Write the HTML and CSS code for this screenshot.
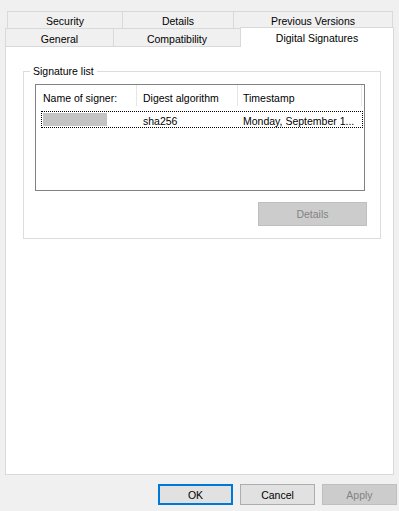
FILE: index.html
```html
<!DOCTYPE html>
<html>
<head>
<meta charset="utf-8">
<link rel="stylesheet" href="styles.css">
</head>
<body>
<div class="dialog">
  <div class="tabs">
    <div class="row row1">
      <div class="tab t-security">Security</div>
      <div class="tab t-details">Details</div>
      <div class="tab t-prev">Previous Versions</div>
    </div>
    <div class="row row2">
      <div class="tab t-general">General</div>
      <div class="tab t-compat">Compatibility</div>
      <div class="tab t-digital selected">Digital Signatures</div>
    </div>
  </div>
  <div class="panel">
    <fieldset class="group">
      <legend class="legend">Signature list</legend>
      <div class="listview">
        <div class="lv-header">
          <div class="col c1">Name of signer:</div>
          <div class="col c2">Digest algorithm</div>
          <div class="col c3">Timestamp</div>
          <div class="col c4"></div>
        </div>
        <div class="lv-row">
          <div class="cell c1"><span class="redacted"></span></div>
          <div class="cell c2">sha256</div>
          <div class="cell c3">Monday, September 1...</div>
        </div>
      </div>
      <div class="group-actions">
        <button class="btn disabled wide">Details</button>
      </div>
    </fieldset>
  </div>
  <div class="footer">
    <button class="btn default">OK</button>
    <button class="btn">Cancel</button>
    <button class="btn disabled">Apply</button>
  </div>
</div>
</body>
</html>
```
FILE: styles.css
```css
* { box-sizing: border-box; }
html, body { margin: 0; padding: 0; }
body {
  background: #f0f0f0;
  width: 399px;
  height: 511px;
  overflow: hidden;
  font-family: "Liberation Sans", Arial, sans-serif;
  font-size: 10.5px;
  color: #000;
}
.tabs { padding-top: 11px; }
.row { display: flex; }
.row1 { margin-left: 7px; height: 17px; }
.row2 { margin-left: 5px; height: 19px; align-items: flex-end; }
.tab {
  border: 1px solid #d9d9d9;
  margin-right: -1px;
  background: #f0f0f0;
  display: flex;
  align-items: center;
  justify-content: center;
  line-height: 1;
  flex-shrink: 0;
}
.row1 .tab { border-bottom: none; height: 17px; padding-top: 3px; }
.row2 .tab { height: 19px; padding-top: 3px; }
.t-security { width: 116px; }
.t-details { width: 112px; }
.t-prev { width: 160px; }
.t-general { width: 109px; }
.t-compat { width: 128px; }
.t-digital { width: 154px; }
.tab.selected {
  background: #fff;
  border-bottom: none;
  height: 20px;
  margin-top: -1px;
  align-items: flex-start;
  padding-top: 5px;
}
.panel {
  margin-left: 5px;
  width: 389px;
  height: 428px;
  background: #fff;
  border: 1px solid #d9d9d9;
  border-top: none;
  padding: 17px 0 0 17px;
}
.group {
  margin: 0;
  padding: 0;
  width: 358px;
  height: 175px;
  border: 1px solid #dcdcdc;
  min-width: 0;
}
.legend {
  padding: 0 3px;
  margin-left: 6px;
  line-height: 14px;
}
.listview {
  margin: 6px 0 0 11px;
  width: 330px;
  height: 107px;
  border: 1px solid #828282;
  background: #fff;
}
.lv-header {
  display: flex;
  height: 22px;
}
.col {
  flex-shrink: 0;
  border-right: 1px solid #e5e5e5;
  height: 21px;
  padding: 5px 0 0 7px;
  display: flex;
  align-items: center;
}
.col.c1 { width: 101px; }
.col.c2 { width: 101px; padding-left: 6px; }
.col.c3 { width: 124px; padding-left: 5px; }
.col.c4 { border-right: none; flex: 1 1 auto; flex-shrink: 1; padding: 0; min-width: 0; }
.lv-row {
  display: flex;
  margin: 4px 0 0 5px;
  width: 322px;
  height: 17px;
  border: 1px dotted #000;
  align-items: center;
}
.cell { padding-top: 2px; }
.cell.c1 { width: 95px; padding: 0 0 0 1px; display: flex; align-items: center; }
.cell.c2 { width: 101px; padding-left: 6px; }
.cell.c3 { flex: 1; padding-left: 5px; }
.redacted {
  display: block;
  width: 64px;
  height: 13px;
  background: #c4c4c4;
}
.group-actions {
  display: flex;
  justify-content: flex-end;
  padding: 11px 13px 0 0;
}
.btn {
  font: inherit;
  color: #000;
  background: #e1e1e1;
  border: 1px solid #adadad;
  width: 75px;
  height: 21px;
  padding: 1px 0 0;
  margin: 0;
  line-height: 1;
}
.btn.wide { width: 109px; height: 24px; }
.btn.disabled {
  background: #cccccc;
  border-color: #bfbfbf;
  color: #838383;
}
.btn.default { border: 2px solid #0078d7; }
.footer {
  display: flex;
  gap: 7px;
  padding: 9px 0 0 158px;
}
```
